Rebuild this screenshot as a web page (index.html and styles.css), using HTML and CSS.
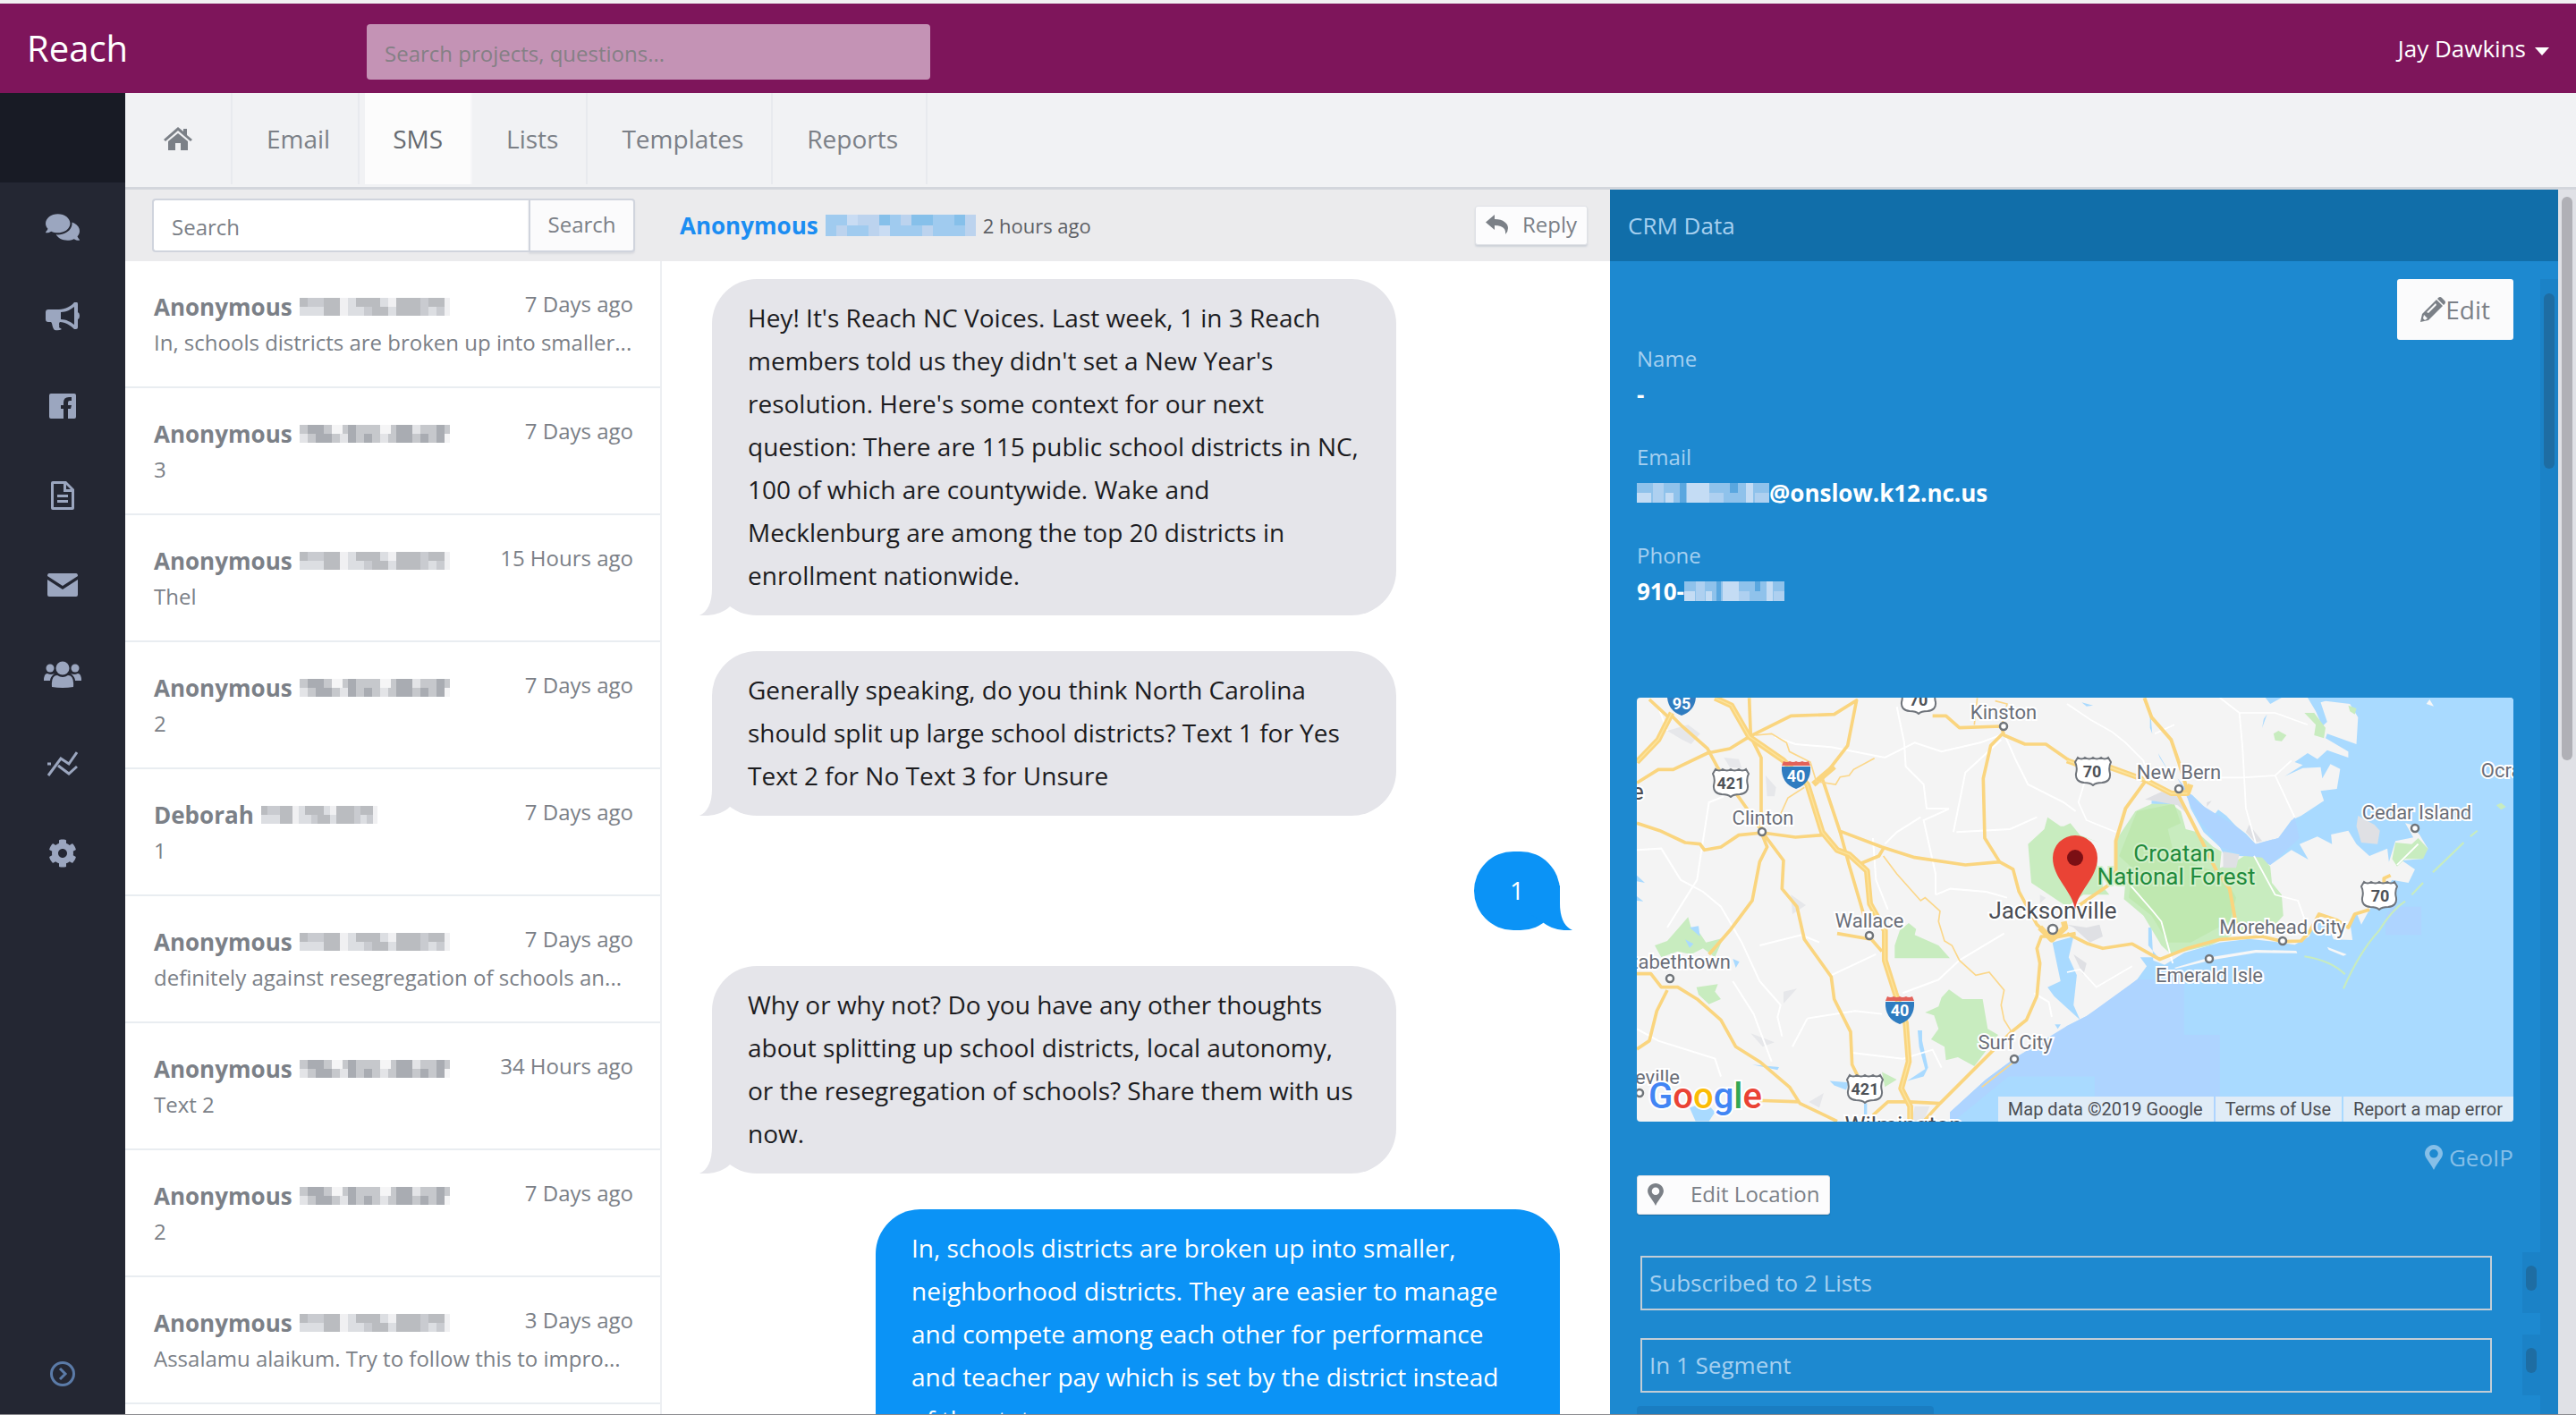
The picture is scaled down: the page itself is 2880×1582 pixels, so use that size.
FILE: index.html
```html
<!DOCTYPE html>
<html lang="en">
<head>
<meta charset="utf-8">
<title>Reach - SMS</title>
<link rel="stylesheet" href="styles.css">
</head>
<body>
<svg class="defs" aria-hidden="true">
  <defs>
    <symbol id="tail" viewBox="0 0 50 50"><path d="M14 0V20C14 36 9 46 0 50C13 51 26 48 34 40L50 30V0Z"/></symbol>
    <symbol id="pin" viewBox="0 0 20 28"><path fill-rule="evenodd" d="M10 0C4.500 0 0 4.500 0 9.600C0 15 5.500 19 10 28C14.500 19 20 15 20 9.600C20 4.500 15.500 0 10 0ZM10 5A4.800 4.800 0 1 1 10 14.600A4.800 4.800 0 1 1 10 5Z"/></symbol>
    <symbol id="mask-a" viewBox="0 0 168 20" preserveAspectRatio="none">
      <path fill="#dcdee2" d="M0 0h168v20H0z"/>
      <path fill="#babcc0" d="M0 0h18v10H0zM27 0h18v20H27zM63 0h27v10H63zM81 10h18v10H81zM108 0h27v20h-27zM144 0h18v10h-18z"/>
      <path fill="#c9cbd0" d="M9 0h18v10H9zM72 10h9v10h-9zM135 0h9v20h-9zM153 10h9v10h-9z"/>
      <path fill="#f0f0f2" d="M45 0h9v20h-9zM99 0h9v10h-9zM162 0h6v20h-6z"/>
    </symbol>
    <symbol id="mask-b" viewBox="0 0 168 20" preserveAspectRatio="none">
      <path fill="#c6c8cc" d="M0 0h168v20H0z"/>
      <path fill="#a9acb2" d="M9 0h18v10H9zM18 10h18v10H18zM54 0h9v20h-9zM72 10h9v10h-9zM108 0h18v20h-18zM135 10h9v10h-9zM153 0h9v20h-9z"/>
      <path fill="#e3e4e7" d="M0 10h9v10H0zM45 10h9v10h-9zM90 10h9v10h-9zM126 0h9v10h-9z"/>
      <path fill="#f5f5f6" d="M36 0h12v10H36zM90 0h12v10H90zM162 10h6v10h-6z"/>
    </symbol>
    <symbol id="mask-blue" viewBox="0 0 168 24" preserveAspectRatio="none">
      <path fill="#a0cbef" d="M0 0h168v24H0z"/>
      <path fill="#bcd3ee" d="M12 12h12v12H12zM36 0h24v12H36zM48 12h12v12H48zM84 0h12v12H84zM108 12h12v12h-12zM156 0h12v24h-12z"/>
      <path fill="#86c0ea" d="M60 0h12v12H60zM96 0h12v12H96zM108 0h12v12h-12zM144 0h12v12h-12z"/>
      <path fill="#c9dcf3" d="M60 12h12v12H60zM24 0h12v12H24z"/>
    </symbol>
    <symbol id="mask-pale" viewBox="0 0 168 22" preserveAspectRatio="none">
      <path fill="#8fc2eb" d="M0 0h168v22H0z"/>
      <path fill="#c4dcf4" d="M0 11h18v11H0zM36 11h10v11H36zM64 0h28v22H64zM138 0h10v22h-10z"/>
      <path fill="#5aa7df" d="M54 0h8v22h-8zM118 0h10v11h-10z"/>
      <path fill="#aed0f0" d="M20 0h14v22H20zM92 11h18v11H92zM150 11h18v11h-18z"/>
    </symbol>
    <symbol id="us" viewBox="-21 -17 42 34"><path d="M-17 -15Q-13 -12 -9 -15Q-4 -12 0 -15Q4 -12 9 -15Q13 -12 17 -15L20 -10Q17 -4 19 3Q20 12 10 13Q3 13 0 16Q-3 13 -10 13Q-20 12 -19 3Q-17 -4 -20 -10Z" fill="#fff" stroke="#6f747b" stroke-width="2"/></symbol>
    <symbol id="interstate" viewBox="-17 -17 34 34"><path d="M-16 -9H16Q17 10 0 16Q-17 10 -16 -9Z" fill="#2f7cc0"/><path d="M-14 -15Q-10 -13 -7 -15Q-3 -13 0 -15Q3 -13 7 -15Q10 -13 14 -15L16 -10H-16Z" fill="#e2625a"/></symbol>
  </defs>
</svg>

<header class="topbar">
  <a class="brand" href="#">Reach</a>
  <input class="global-search" type="search" placeholder="Search projects, questions..." aria-label="Search projects and questions">
  <button class="account" type="button">Jay Dawkins <span class="caret"></span></button>
</header>

<div class="shell">
  <nav class="sidebar" aria-label="Sections">
    <div class="sidebar-logo"></div>
    <a href="#" aria-label="Conversations"><svg width="38" height="34" viewBox="0 0 576 512"><path d="M416 192c0-88.400-93.100-160-208-160S0 103.600 0 192c0 34.300 14.100 65.900 38 92-13.400 30.200-35.500 54.200-35.800 54.500-2.200 2.300-2.800 5.700-1.500 8.700S4.800 352 8 352c36.600 0 66.900-12.300 88.700-25 32.200 15.700 70.300 25 111.300 25 114.900 0 208-71.600 208-160zm122 220c23.900-26 38-57.700 38-92 0-66.900-53.500-124.200-129.300-148.100.9 6.600 1.300 13.300 1.300 20.100 0 105.900-107.700 192-240 192-10.800 0-21.300-.8-31.700-1.900C207.800 439.600 281.800 480 368 480c41 0 79.100-9.200 111.300-25 21.800 12.700 52.100 25 88.700 25 3.200 0 6.100-1.900 7.300-4.800 1.300-2.900.7-6.300-1.500-8.700-.3-.3-22.400-24.200-35.800-54.500z"/></svg></a>
    <a href="#" aria-label="Campaigns"><svg width="38" height="32" viewBox="0 0 38 32"><path fill-rule="evenodd" d="M3 8H15C22 8 29 4 32 0H35Q36 0 36 2V11Q38 12 38 15Q38 18 36 19V28Q36 30 34 30H32C28 26 22 22 16 22C14 24 16 26 15 28L18 30Q15 32 10 31C7 28 8 24 6 22H3Q0 22 0 19V11Q0 8 3 8ZM17 11V19C23 19 28 22 32 25V5C28 8 23 11 17 11Z"/></svg></a>
    <a href="#" aria-label="Facebook"><svg width="30" height="28" viewBox="0 0 30 28"><path d="M2 0H28Q30 0 30 2V26Q30 28 28 28H21V17H24L25 13H21V10Q21 8 23 8H25V4H22Q16 4 16 10V13H13V17H16V28H2Q0 28 0 26V2Q0 0 2 0Z"/></svg></a>
    <a href="#" aria-label="Pages"><svg width="26" height="32" viewBox="0 0 26 32"><path fill-rule="evenodd" d="M2 0H17L26 9V30Q26 32 24 32H2Q0 32 0 30V2Q0 0 2 0ZM3 3V29H23V12H14V3ZM17 4V9H22ZM7 15H19V18H7ZM7 21H19V24H7Z"/></svg></a>
    <a href="#" aria-label="Mail"><svg width="34" height="26" viewBox="0 0 34 26"><path d="M2 0H32Q34 0 34 3L17 14L0 3Q0 0 2 0ZM0 7L17 18L34 7V24Q34 26 32 26H2Q0 26 0 24Z"/></svg></a>
    <a href="#" aria-label="People"><svg width="42" height="30" viewBox="0 0 42 30"><circle cx="21" cy="8" r="7.500"/><circle cx="7" cy="8" r="4.500"/><circle cx="35" cy="8" r="4.500"/><path d="M9 29Q8 16 15 16Q21 20 27 16Q34 16 33 29Q21 31 9 29ZM0 22Q0 14 4 14Q8 16 12 14Q7 18 7 22ZM42 22Q42 14 38 14Q34 16 30 14Q35 18 35 22Z"/></svg></a>
    <a href="#" aria-label="Analytics"><svg width="34" height="30" viewBox="0 0 34 30"><path d="M1 28L15 9L24 15L33 2M0 15H4M12 17L24 26L33 18" fill="none" stroke="#9ba6bf" stroke-width="3"/></svg></a>
    <a href="#" aria-label="Settings"><svg width="32" height="32" viewBox="0 0 512 512"><path d="M487.400 315.700l-42.600-24.600c4.300-23.200 4.300-47 0-70.200l42.600-24.600c4.900-2.800 7.100-8.600 5.500-14-11.100-35.600-30-67.800-54.700-94.600-3.800-4.100-10-5.100-14.800-2.300L380.800 110c-17.900-15.400-38.500-27.300-60.800-35.100V25.800c0-5.600-3.900-10.500-9.400-11.700-36.700-8.200-74.300-7.800-109.200 0-5.500 1.200-9.400 6.100-9.400 11.700V75c-22.200 7.900-42.800 19.800-60.800 35.100L88.700 85.500c-4.900-2.800-11-1.900-14.800 2.300-24.700 26.700-43.600 58.900-54.700 94.600-1.700 5.400.6 11.200 5.500 14L67.300 221c-4.300 23.200-4.300 47 0 70.200l-42.600 24.600c-4.900 2.800-7.100 8.600-5.500 14 11.100 35.600 30 67.800 54.700 94.600 3.800 4.100 10 5.100 14.800 2.300l42.600-24.600c17.900 15.400 38.500 27.300 60.800 35.100v49.200c0 5.600 3.900 10.500 9.400 11.700 36.700 8.200 74.300 7.800 109.200 0 5.500-1.200 9.400-6.100 9.400-11.700v-49.200c22.200-7.900 42.800-19.800 60.800-35.100l42.600 24.600c4.900 2.800 11 1.900 14.800-2.300 24.700-26.700 43.600-58.900 54.700-94.600 1.500-5.500-.7-11.300-5.600-14.100zM256 336c-44.100 0-80-35.900-80-80s35.900-80 80-80 80 35.900 80 80-35.900 80-80 80z"/></svg></a>
    <button class="expand" type="button" aria-label="Expand menu"><svg width="30" height="30" viewBox="0 0 30 30"><circle cx="15" cy="15" r="12.500"/><path d="M12 9L18 15L12 21"/></svg></button>
  </nav>

  <main class="main">
    <nav class="tabs" aria-label="Channels">
      <a class="home" href="#" aria-label="Home"><svg width="32" height="26" viewBox="0 0 32 26"><path d="M16 0L22 5V2H26V9L32 14L30 16L16 4L2 16L0 14ZM16 7L27 16V26H19V18H13V26H5V16Z"/></svg></a>
      <a href="#">Email</a>
      <a class="active" href="#" aria-current="page">SMS</a>
      <a href="#">Lists</a>
      <a href="#">Templates</a>
      <a href="#">Reports</a>
    </nav>

    <div class="columns">
      <section class="inbox">
        <form class="inbox-search bar">
          <input type="text" placeholder="Search" aria-label="Search messages">
          <button type="button">Search</button>
        </form>
        <ul class="threads">
          <li><div class="line"><b>Anonymous</b><svg class="mask"><use href="#mask-a"/></svg><time>7 Days ago</time></div><p>In, schools districts are broken up into smaller...</p></li>
          <li><div class="line"><b>Anonymous</b><svg class="mask"><use href="#mask-b"/></svg><time>7 Days ago</time></div><p>3</p></li>
          <li><div class="line"><b>Anonymous</b><svg class="mask"><use href="#mask-a"/></svg><time>15 Hours ago</time></div><p>Thel</p></li>
          <li><div class="line"><b>Anonymous</b><svg class="mask"><use href="#mask-b"/></svg><time>7 Days ago</time></div><p>2</p></li>
          <li><div class="line"><b>Deborah</b><svg class="mask short"><use href="#mask-a"/></svg><time>7 Days ago</time></div><p>1</p></li>
          <li><div class="line"><b>Anonymous</b><svg class="mask"><use href="#mask-a"/></svg><time>7 Days ago</time></div><p>definitely against resegregation of schools an...</p></li>
          <li><div class="line"><b>Anonymous</b><svg class="mask"><use href="#mask-b"/></svg><time>34 Hours ago</time></div><p>Text 2</p></li>
          <li><div class="line"><b>Anonymous</b><svg class="mask"><use href="#mask-b"/></svg><time>7 Days ago</time></div><p>2</p></li>
          <li><div class="line"><b>Anonymous</b><svg class="mask"><use href="#mask-a"/></svg><time>3 Days ago</time></div><p>Assalamu alaikum. Try to follow this to impro...</p></li>
        </ul>
      </section>

      <section class="chat">
        <div class="chat-head bar">
          <a href="#">Anonymous</a><svg class="mask"><use href="#mask-blue"/></svg><time>2 hours ago</time>
          <button class="small-btn reply" type="button"><svg width="25" height="22" viewBox="0 0 25 22"><path d="M10 0V5C20 5 25 10 25 15Q25 19 22 22C23 15 18 12 10 12V17L0 8.500Z"/></svg>Reply</button>
        </div>
        <div class="messages">
          <p class="bubble in"><svg><use href="#tail"/></svg>Hey! It's Reach NC Voices. Last week, 1 in 3 Reach members told us they didn't set a New Year's resolution. Here's some context for our next question: There are 115 public school districts in NC, 100 of which are countywide. Wake and Mecklenburg are among the top 20 districts in enrollment nationwide.</p>
          <p class="bubble in"><svg><use href="#tail"/></svg>Generally speaking, do you think North Carolina should split up large school districts? Text 1 for Yes Text 2 for No Text 3 for Unsure</p>
          <p class="bubble out"><svg><use href="#tail"/></svg>1</p>
          <p class="bubble in"><svg><use href="#tail"/></svg>Why or why not? Do you have any other thoughts about splitting up school districts, local autonomy, or the resegregation of schools? Share them with us now.</p>
          <p class="bubble out"><svg><use href="#tail"/></svg>In, schools districts are broken up into smaller, neighborhood districts. They are easier to manage and compete among each other for performance and teacher pay which is set by the district instead of the state.</p>
        </div>
      </section>

      <section class="crm">
        <h2 class="bar">CRM Data</h2>
        <div class="crm-body">
          <div class="crm-content">
            <button class="edit" type="button"><svg width="28" height="28" viewBox="0 0 28 28"><path fill-rule="evenodd" d="M0 28L2 19L18 3L25 10L9 26ZM3 24L5 26L8 24L4 20ZM17 7L7 17L9 18L18 9ZM20 1Q22 -1 24 1L27 4Q29 6 27 8L26 9L19 2Z"/></svg>Edit</button>
            <dl>
              <div><dt>Name</dt><dd>-</dd></div>
              <div><dt>Email</dt><dd><svg class="mask email"><use href="#mask-pale"/></svg>@onslow.k12.nc.us</dd></div>
              <div><dt>Phone</dt><dd>910-<svg class="mask phone"><use href="#mask-pale"/></svg></dd></div>
            </dl>

            <div class="map">
              <svg viewBox="0 0 980 474" preserveAspectRatio="xMidYMid slice" role="img" aria-label="Map centred on Jacksonville">
                <rect width="980" height="474" fill="#f4f4f4"/>
                <g transform="matrix(.3635 0 0 .3333 481 -9.670)">
                  <path fill="#a9daff" d="M740 29L765 75L785 125L800 110L780 45L795 40L870 50L895 95L890 185L800 150L795 165L865 210L865 230L800 205L770 235L740 215L700 245L725 255L670 292L725 265L780 262L785 300L810 252L840 268L830 335L780 342L790 375L720 425L690 440L650 500L580 520L550 485L520 460L490 425L465 405L450 425L385 355L365 345L380 400L420 480L470 530L480 550L530 560L600 565L625 590L690 540L742 572L715 520L770 495L815 520L812 488L865 475L890 520L930 560L985 535L990 580L1010 510L1065 498L1040 450L1060 455L1085 490L1110 535L1090 570L1030 575L1070 605L1050 650L1000 640L930 740L905 790L890 750L870 780L878 842L820 840L800 790L760 780L745 830L700 858L640 848L560 838L470 850L360 885L300 925L265 910L260 800L250 800L250 860L280 900L225 900L245 930L215 975L140 1040L60 1097L0 1130L-47 1170L-157 1235L-250 1310L-360 1420L-360 1460H1400V29Z"/>
                  <path fill="#aed4ff" d="M-360 1460L-360 1420L-250 1310L-157 1235L0 1130L60 1097L215 975H360V1160H470V1460ZM340 300L400 380L520 460L580 520L650 500L700 430L715 500L625 590L470 530L400 430ZM1000 730H1090V825H980V760Z"/>
                  <path fill="#a9daff" d="M-360 1460L-180 1300H85V1460ZM-45 850L20 830L5 900L30 960L20 1060L40 1110L-40 1030L-60 1000L-20 980ZM255 60L262 150L255 130ZM280 215L320 290L285 230ZM615 85L600 130L605 100ZM625 50L660 29H610ZM45 45L80 55L60 58ZM260 375L340 370L320 388L260 385Z"/>
                  <path fill="#f7f7f7" d="M330 935L440 900L580 875L705 878L708 886L580 885L450 908L335 938ZM800 865L860 890L850 895L805 875ZM1105 50L1115 35L1128 58Z"/>
                  <path fill="#c8ecbf" d="M210 410L260 385H320L350 410L365 470L400 480L450 530L475 545L470 600L500 590L545 560L600 565L625 595L630 650L660 690L665 760L640 790L590 785L540 810L440 860L320 890L290 860L235 760L175 705L180 640L150 600L155 500ZM730 80L760 80L795 130L790 165L760 155L765 120ZM635 150L650 140L675 155L660 175L640 172ZM865 55L890 65L885 85L870 75ZM1010 515L1060 520L1080 500L1110 535L1095 570L1040 570L1015 595L1000 570ZM1320 390L1335 382L1350 395L1335 405ZM-10 460L10 450L40 490L100 515L60 500L90 560L100 650L130 690L50 690L0 730L-110 650L-120 520L-70 470L-60 430L-20 460Z"/>
                  <path fill="#bfe8b0" d="M215 410L330 385L350 450L310 470L330 560L420 600L480 620L520 700L500 780L380 850L310 850L260 760L190 700L200 600L160 560Z"/>
                  <path fill="none" stroke="#c8ecbf" stroke-width="6" d="M730 897Q810 910 855 957M850 1005Q900 880 960 810Q1000 740 1040 712M1060 690L1095 650M1125 615L1220 515M1240 495L1262 475"/>
                  <path fill="#dfe0e4" d="M895 425L945 455L962 475L955 520L905 515L890 460ZM480 545L530 555L520 600L480 600ZM0 790L60 800L100 790L110 830L70 850L20 800ZM20 890L60 920L50 960ZM430 380L445 375L430 395ZM550 480L580 515L600 510L560 455ZM240 370L290 345L350 360L370 420L340 390Z"/>
                  <path fill="none" stroke="#fff" stroke-width="5" d="M0 50L75 105L140 145L180 180L235 240L240 260M470 29L530 80L540 200L550 400L580 515M530 80H640L740 120M470 297H540L640 290L690 240M640 290L670 360L700 430M60 290L35 380L60 440L150 480M180 640L260 740L290 780L325 920M575 560L640 690L710 710L730 770M0 950L40 940L90 1000L200 930M1015 590L1080 520M270 150L330 120"/>
                </g>
                <g transform="translate(-9.330 -9.670) scale(.3333)">
                  <path fill="#c8ecbf" d="M910 810L940 785L965 805L960 825L1040 860L1078 903H893V860ZM1075 1008L1120 1040L1188 1040L1205 1140L1240 1160L1160 1265L1105 1235L1065 1245L1060 1200L1015 1175L1040 1140L1025 1095L995 1085L1040 1065L1050 1035ZM88 860L130 845L200 765L210 800L240 820L260 850L318 835L290 900L250 870L210 890L165 880L110 900ZM228 1000L300 990L290 1015L310 1040L270 1057L235 1025ZM850 1285L900 1310L860 1335Z"/>
                  <path fill="#a9daff" d="M205 800L235 795L240 830ZM190 840L218 855L205 868ZM350 905L372 915L360 935ZM28 625L55 650L28 645ZM28 695L50 712L28 710ZM205 1405L260 1385L290 1420L270 1450H225ZM675 1315L740 1320L730 1345L690 1330ZM970 1145H985V1180L1005 1270L990 1300L935 1315L995 1275L975 1200ZM415 1260L505 1268L500 1278ZM790 1390H800V1450H790ZM1430 1125L1450 1125L1440 1140Z"/>
                  <path fill="#e6e7ea" d="M130 140L200 120L240 150L210 185L180 170ZM320 230L370 235L380 265L340 262ZM460 290L495 330L490 360L465 360ZM545 690L595 725L550 755ZM520 1015L565 1005L520 1055ZM605 1385L655 1355L640 1405ZM410 1155L490 1185L450 1200ZM960 1400H1010L990 1450H950ZM1380 690L1400 700L1380 720Z"/>
                  <path fill="none" stroke="#fff" stroke-width="6" d="M28 540L110 535L175 640L250 680L310 730L380 850L440 980L510 1060L500 1100L515 1165M320 360L270 380L245 540L230 640L130 800M490 160L560 185L680 195L860 230L960 180L1050 210L1180 180L1260 150L1300 240M900 60L925 180L930 260L990 320L1000 400L1075 402L990 440L1030 620L1030 690M860 520L900 480L980 430M1250 170L1130 280L1090 480M680 960L830 890M440 860L580 825L640 850M350 980L420 1090L480 1250M920 1020L1040 975L1110 910L1260 820M1030 690L1080 670L1200 680L1270 700M600 1105L760 1080L850 1090M600 1105L550 1200M28 1140L100 1180L290 1240L310 1300M1300 240L1340 320L1460 380L1500 410M100 60L130 140M750 1220L920 1240L1020 1210L1050 1270M1360 1020L1410 1050L1420 1100M1100 480L1280 470L1370 430M820 500L830 640L870 740"/>
                  <path class="road" stroke-width="11" d="M28 245L100 170L140 100L70 35M145 90L180 125L265 200L300 265L375 370L400 405L449 480L520 575L515 670L565 730L590 840L680 965L690 1040L745 1150L750 1260L770 1300M28 315L100 270H150L265 215L340 200L405 160L545 90L690 85L765 38L735 190L650 300L710 480L740 590L790 760M405 30L410 160L445 230V470M28 450L105 475L190 515L240 520L255 540L310 530L370 490L449 482L560 497L650 490M705 475L850 530L960 565L1130 590L1245 580L1290 605L1310 680L1370 790L1420 835L1500 820M449 490L465 530L440 580L415 710L340 810L270 890M780 585L840 560L855 535M28 955H75L110 1000H165L230 1040L310 1110L360 1200L440 1250L540 1335L575 1390L700 1450M430 1380L575 1385M130 1010L95 1080L70 1180L28 1208M1020 90H1065L1110 130L1250 125L1260 155L1330 185H1400L1500 255M1255 150L1215 190L1190 300L1195 500L1245 580M1420 830L1385 830L1370 870L1380 920L1370 1030L1335 1110L1285 1150L1045 1390L990 1450M1045 1390L940 1385L870 1385L820 1430M700 820L815 840L850 880"/>
                  <path class="road" stroke-width="20" d="M145 80L100 170L28 245M290 30L345 55L405 160L520 240L600 320L650 480L700 540L740 555L800 610L810 720L860 810L860 910L895 1020L930 1120L940 1250L915 1340L945 1400V1460M620 320L690 260M1380 800L1420 840L1465 800L1460 780"/>
                  <path fill="none" stroke="#fce49c" stroke-width="4" d="M145 80L100 170L28 245M290 30L345 55L405 160L520 240L600 320L650 480L700 540L740 555L800 610L810 720L860 810L860 910L895 1020L930 1120L940 1250L915 1340L945 1400V1460"/>
                  <path fill="none" stroke="#fbd78a" stroke-width="5" d="M425 155L480 150L530 180L540 210L610 245L630 310L695 320L710 295L740 290L755 270L825 232M510 420L535 365L590 330M855 560L900 620L980 710L995 700L1045 745L1040 780L1060 845L1085 860L1110 910L1165 960L1210 950L1260 1010L1250 1060L1260 1110L1285 1150M1300 1245L1185 1335M1160 120L1170 30M1250 130L1270 50L1230 40"/>
                </g>
                <g transform="matrix(.3635 0 0 .3333 481 -9.670)">
                  <path class="road" stroke-width="11" d="M238 30L260 95L320 170L345 250L370 340L340 350L410 500L460 610L500 670L520 790M240 310L180 400L150 510V610L125 660L25 735M0 820L65 855L110 870L200 855L285 907L370 870L470 840L600 830L664 847L720 845L745 815L775 755L830 775L865 800L885 755L930 740M975 650V635L995 625"/>
                  <path class="road" stroke-width="18" d="M0 240L80 270L130 262L240 305L320 350H370L380 320"/>
                  <path fill="none" stroke="#fce49c" stroke-width="5" d="M0 240L80 270L130 262L240 305L320 350H370"/>
                </g>
                <g fill="#fff" stroke="#70757a" stroke-width="2.500">
                  <circle cx="410" cy="32" r="4"/><circle cx="140" cy="150" r="4"/><circle cx="260" cy="266" r="4"/><circle cx="37" cy="314" r="4"/><circle cx="3" cy="442" r="4"/><circle cx="465" cy="259" r="5"/><circle cx="422" cy="404" r="4"/><circle cx="606" cy="102" r="4"/><circle cx="870" cy="146" r="4"/><circle cx="722" cy="272" r="4"/><circle cx="640" cy="292" r="4"/>
                </g>
                <use href="#interstate" x="33" y="-13" width="34" height="34"/><use href="#interstate" x="161" y="69" width="34" height="34"/><use href="#interstate" x="277" y="332" width="34" height="34"/>
                <use href="#us" x="84" y="78" width="42" height="34"/><use href="#us" x="234" y="420" width="42" height="34"/><use href="#us" x="294" y="-15" width="42" height="34"/><use href="#us" x="489" y="65" width="42" height="34"/><use href="#us" x="809" y="204" width="42" height="34"/>
                <g class="route white"><text x="50" y="13">95</text><text x="178" y="94">40</text><text x="294" y="356">40</text></g>
                <g class="route"><text x="105" y="102">421</text><text x="255" y="444">421</text><text x="315" y="9">70</text><text x="509" y="89">70</text><text x="831" y="228">70</text></g>
                <g class="town">
                  <text x="410" y="24">Kinston</text><text x="141" y="142">Clinton</text><text x="260" y="257">Wallace</text><text class="end" x="105" y="303">Elizabethtown</text><text class="end" x="48" y="432">Whiteville</text><text x="423" y="393">Surf City</text><text x="606" y="91">New Bern</text><text x="872" y="136">Cedar Island</text><text x="990" y="89">Ocracoke</text><text x="722" y="264">Morehead City</text><text x="640" y="318">Emerald Isle</text>
                </g>
                <g class="town city"><text x="465" y="247">Jacksonville</text><text x="298" y="487">Wilmington</text><text x="1" y="114">e</text></g>
                <g class="town forest"><text x="601" y="183">Croatan</text><text x="603" y="209">National Forest</text></g>
                <path fill="#ea4335" d="M490 237C487 216 465 202 465 179A25 25 0 0 1 515 179C515 202 493 216 490 237Z"/><circle cx="490" cy="179" r="9" fill="#7b0f14"/>
                <text class="logo" x="13" y="459"><tspan fill="#4285f4">G</tspan><tspan fill="#ea4335">o</tspan><tspan fill="#fbbc05">o</tspan><tspan fill="#4285f4">g</tspan><tspan fill="#34a853">l</tspan><tspan fill="#ea4335">e</tspan></text>
              </svg>
              <div class="map-legal"><span>Map data ©2019 Google</span><a href="#">Terms of Use</a><a href="#">Report a map error</a></div>
            </div>

            <p class="geoip"><svg width="20" height="28"><use href="#pin"/></svg>GeoIP</p>
            <button class="small-btn location" type="button"><svg width="18" height="25"><use href="#pin"/></svg>Edit Location</button>

            <div class="membership"><div class="box">Subscribed to 2 Lists</div><div class="mini-scroll"><i></i></div></div>
            <div class="membership"><div class="box">In 1 Segment</div><div class="mini-scroll"><i></i></div></div>
            <button class="more" type="button" aria-label="More"></button>
          </div>
          <div class="crm-scroll"><i></i></div>
        </div>
      </section>
      <div class="page-scroll"><i></i></div>
    </div>
  </main>
</div>
</body>
</html>
```
FILE: styles.css
```css
* { box-sizing: border-box; }

body {
  margin: 0;
  height: 100vh;
  display: flex;
  flex-direction: column;
  overflow: hidden;
  background: #fff;
  border-bottom: 1px solid #8b8b8f;
  color: #7b8087;
  font: 24px/40px "Open Sans", "Noto Sans", sans-serif;
}
button, input { font: inherit; color: inherit; margin: 0; }
button { cursor: pointer; }
a { color: inherit; text-decoration: none; }
p, h2, ul, dl, dd { margin: 0; padding: 0; }
svg { fill: currentColor; flex: none; }
.defs { position: absolute; width: 0; height: 0; }
.mask { width: 168px; height: 20px; shape-rendering: crispEdges; }

/* top bar */
.topbar {
  flex: none;
  display: flex;
  align-items: center;
  height: 104px;
  padding: 0 30px;
  background: #7e155b;
  border-top: 4px solid #f1f0f2;
  color: #fff;
}
.brand { width: 380px; font-size: 40px; }
.global-search {
  width: 630px;
  height: 62px;
  margin-top: 8px;
  padding: 4px 20px 2px;
  border: 0;
  border-radius: 4px;
  background: #c493b5;
}
.global-search::placeholder { color: #858085; opacity: 1; }
.account {
  display: flex;
  align-items: center;
  gap: 10px;
  margin-left: auto;
  padding: 0;
  border: 0;
  background: none;
  font-size: 26px;
}
.caret { border: 8px solid transparent; border-top: 9px solid #fff; border-bottom: 0; margin-top: 6px; }

.shell { flex: 1; min-height: 0; display: flex; }

/* sidebar */
.sidebar {
  flex: none;
  width: 140px;
  display: flex;
  flex-direction: column;
  background: #242733;
  color: #9ba6bf;
}
.sidebar-logo { height: 100px; background: #181b25; }
.sidebar a { height: 100px; display: flex; align-items: center; justify-content: center; }
.expand { margin: auto auto 30px; padding: 0; height: 30px; border: 0; background: none; color: #5b7ba8; }
.expand svg { display: block; fill: none; stroke: currentColor; stroke-width: 3; }

/* tabs */
.main { flex: 1; min-width: 0; display: flex; flex-direction: column; }
.tabs {
  flex: none;
  display: flex;
  height: 108px;
  background: #f1f2f4;
  border-bottom: 3px solid #d3d6dc;
  font-size: 28px;
}
.tabs a {
  display: flex;
  align-items: center;
  height: 102px;
  padding: 0 31px 0 38px;
  border-right: 2px solid #e8eaee;
}
.tabs .home { padding: 0 43px; }
.tabs .active { margin-left: 6px; padding-left: 31px; background: #fcfcfc; border-color: #f6f6f8; color: #666a70; }

.columns { flex: 1; min-height: 0; display: grid; grid-template-columns: 600px 1fr 1fr 20px; }
.columns > section { min-width: 0; min-height: 0; overflow: hidden; display: flex; flex-direction: column; }
.bar { flex: none; display: flex; align-items: center; height: 80px; background: #ebebed; }

/* inbox */
.inbox-search { padding: 0 30px; }
.inbox-search input {
  flex: 1;
  min-width: 0;
  height: 60px;
  padding: 2px 20px 0;
  border: 2px solid #d0d4dd;
  border-right: 0;
  border-radius: 4px 0 0 4px;
  background: #fff;
}
.inbox-search input::placeholder { color: #7b8087; opacity: 1; }
.inbox-search button {
  width: 119px;
  height: 60px;
  padding: 0 0 2px;
  border: 2px solid #d0d4dd;
  border-radius: 0 4px 4px 0;
  background: #fbfbfc;
  box-shadow: 0 2px 2px #dadbe0;
}
.threads { flex: 1; list-style: none; border-right: 2px solid #edeff2; }
.threads li { padding: 31px 30px 29px 32px; border-bottom: 2px solid #e9edf1; }
.line { display: flex; align-items: center; gap: 8px; }
.line b { font-size: 26px; }
.line .short { width: 130px; }
.line time { margin-left: auto; align-self: flex-start; line-height: 34px; }
.threads p { white-space: nowrap; }

/* conversation */
.chat-head { padding: 0 25px 0 20px; gap: 8px; }
.chat-head a { color: #1b8df2; font-size: 26px; font-weight: 700; }
.chat-head .mask { height: 24px; }
.chat-head time { color: #5d6065; font-size: 22px; }
.small-btn {
  display: flex;
  align-items: center;
  height: 44px;
  padding: 0 11px 2px;
  border: 1px solid #dfe1e6;
  border-radius: 3px;
  background: #fcfcfd;
  box-shadow: 0 2px 2px #cfd3da;
}
.reply { margin-left: auto; gap: 16px; }
.messages { flex: 1; min-height: 0; display: flex; flex-direction: column; gap: 40px; padding: 20px 56px 0; }
.bubble {
  position: relative;
  flex: none;
  max-width: calc(100% - 183px);
  padding: 19px 40px 21px;
  border-radius: 50px;
  font-size: 28px;
  line-height: 48px;
}
.bubble svg { position: absolute; bottom: 0; width: 50px; height: 50px; }
.in { align-self: flex-start; background: #e5e5ea; color: #1c1c1f; }
.in svg { left: -14px; fill: #e5e5ea; }
.out { align-self: flex-end; background: #0b93f6; color: #fff; }
.out svg { right: -14px; fill: #0b93f6; transform: scaleX(-1); }

/* contact data */
.crm { background: #1d89d0; color: #a5d0f0; }
.crm h2 { padding-left: 20px; background: #116ea9; font-size: 26px; font-weight: 400; }
.crm-body { flex: 1; min-height: 0; display: flex; }
.crm-content { flex: 1; min-width: 0; display: flex; flex-direction: column; align-items: flex-start; padding: 20px 30px 0; }
.edit {
  flex: none;
  display: flex;
  align-items: center;
  align-self: flex-end;
  height: 68px;
  padding: 0 26px;
  border: 0;
  border-radius: 3px;
  background: #fbfbfc;
  color: #7b8087;
  font-size: 28px;
}
.crm dl { display: flex; flex-direction: column; gap: 30px; margin: 1px 0 99px; }
.crm dd { display: flex; align-items: center; color: #fff; font-size: 26px; font-weight: 700; }
.crm dd .mask { height: 22px; }
.crm .email { width: 148px; }
.crm .phone { width: 112px; }
.map { position: relative; flex: none; width: 100%; border-radius: 4px; overflow: hidden; }
.map > svg { display: block; width: 100%; height: auto; }
.road { fill: none; stroke: #fad57f; stroke-linejoin: round; }
.route { font: 700 18px Roboto, sans-serif; text-anchor: middle; fill: #4e5258; }
.white { fill: #fff; }
.town { font: 22px Roboto, sans-serif; text-anchor: middle; fill: #6a6e78; stroke: #fff; stroke-width: 4px; paint-order: stroke; }
.town .end { text-anchor: end; }
.city { font-size: 26px; fill: #4a4d54; }
.forest { font-size: 26px; fill: #1f8a3c; stroke: #d3f0ca; }
.logo { font: 500 40px Roboto, sans-serif; stroke: #fff; stroke-width: 4px; paint-order: stroke; }
.map-legal {
  position: absolute;
  right: 0;
  bottom: 0;
  display: flex;
  gap: 2px;
  font: 20px/28px Roboto, sans-serif;
  color: #4b4e54;
}
.map-legal > * { padding: 0 12px 0 11px; background: #e0ecf7; }
.geoip { display: flex; align-items: center; gap: 7px; align-self: flex-end; margin-top: 20px; color: #86bfe8; font-size: 26px; }
.location { flex: none; gap: 30px; margin-bottom: 42px; box-shadow: 0 1px 1px #1a6fa8; color: #7b8087; }
.membership { flex: none; display: flex; align-items: center; align-self: stretch; gap: 34px; margin: 0 -30px 24px 4px; }
.box { flex: 1; height: 61px; padding: 8px; border: 2px solid #c3cdd6; font-size: 26px; }
.mini-scroll { width: 20px; height: 68px; padding: 15px 4px; background: #1b82c7; }
.mini-scroll i { display: block; width: 12px; height: 28px; border-radius: 6px; background: #1e6da3; }
.more { flex: none; width: 332px; height: 60px; border: 0; border-radius: 4px; background: #1a7dc1; margin-top: -12px; }
.crm-scroll { width: 20px; margin-top: 20px; padding: 16px 4px; background: #1b82c7; }
.crm-scroll i { display: block; width: 12px; height: 196px; border-radius: 6px; background: #1e6da3; }
.page-scroll { padding: 8px 4px; background: #e0e1e6; }
.page-scroll i { display: block; width: 12px; height: 630px; border-radius: 6px; background: #b0b0b6; }
```
